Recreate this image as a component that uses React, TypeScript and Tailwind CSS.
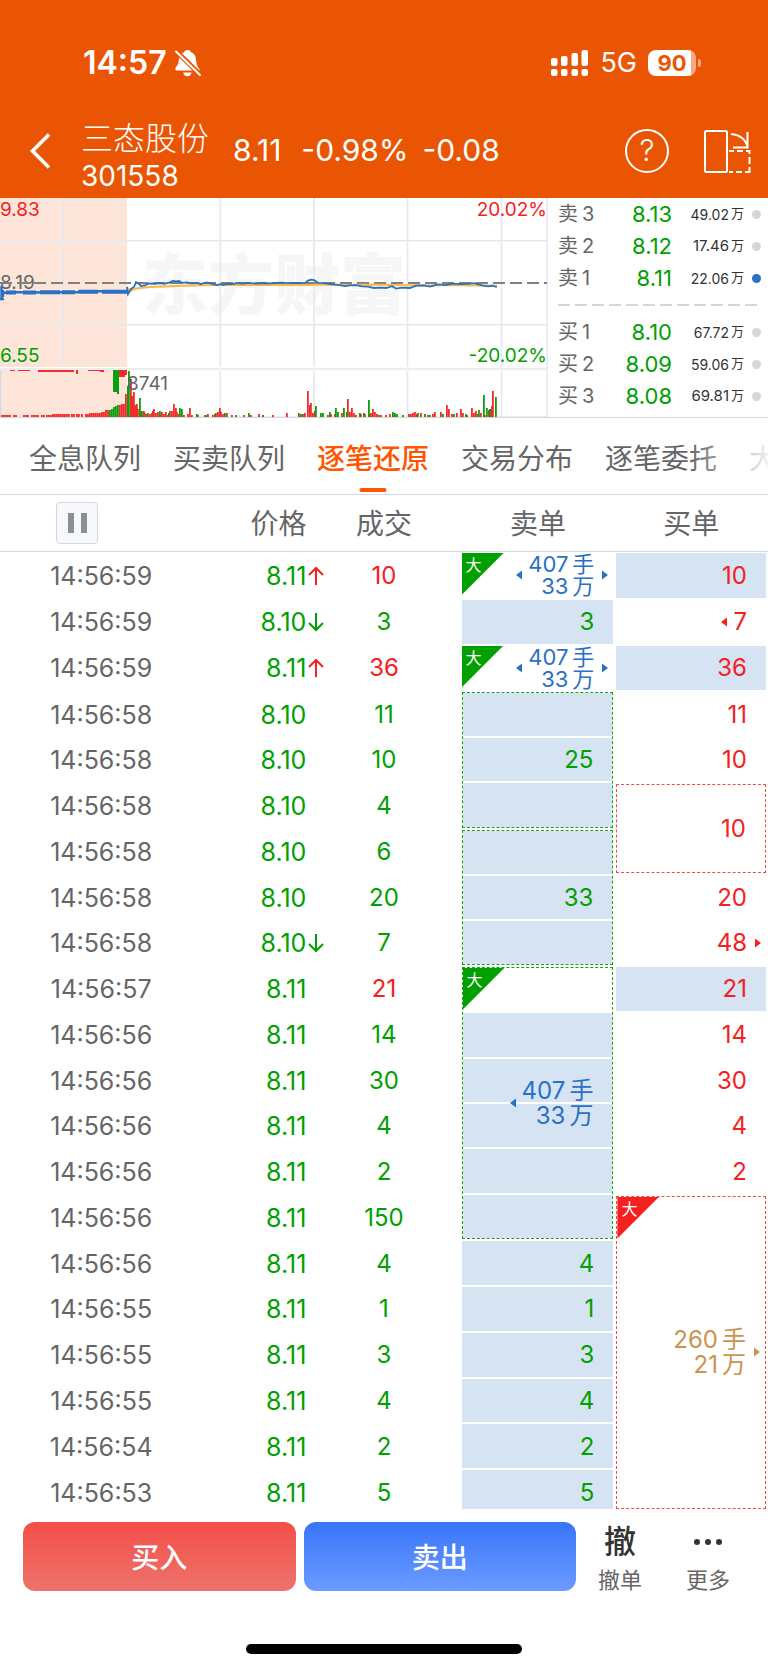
import React from "react";

type Mark = {
  text: string;
  tone: "red" | "green" | "blue" | "tan";
  unit?: string;
  span?: number;
  fill?: boolean;
  dashed?: boolean;
  big?: boolean;
  left?: boolean;
  right?: boolean;
};

type Trade = {
  time: string;
  price: string;
  dir?: "up" | "down";
  volume: string;
  buyer?: boolean;
  sell?: Mark;
  buy?: Mark;
};

const textTone = {
  red: "text-[#f52020]",
  green: "text-[#00a000]",
  blue: "text-[#2a70c4]",
  tan: "text-[#cc9250]",
};

const trades: Trade[] = [
  { time: "14:56:59", price: "8.11", dir: "up", volume: "10", buyer: true, sell: { text: "407", unit: "33", tone: "blue", big: true, left: true, right: true }, buy: { text: "10", tone: "red", fill: true } },
  { time: "14:56:59", price: "8.10", dir: "down", volume: "3", sell: { text: "3", tone: "green", fill: true }, buy: { text: "7", tone: "red", left: true } },
  { time: "14:56:59", price: "8.11", dir: "up", volume: "36", buyer: true, sell: { text: "407", unit: "33", tone: "blue", big: true, left: true, right: true }, buy: { text: "36", tone: "red", fill: true } },
  { time: "14:56:58", price: "8.10", volume: "11", sell: { text: "25", tone: "green", span: 3, fill: true, dashed: true }, buy: { text: "11", tone: "red" } },
  { time: "14:56:58", price: "8.10", volume: "10", buy: { text: "10", tone: "red" } },
  { time: "14:56:58", price: "8.10", volume: "4", buy: { text: "10", tone: "red", span: 2, dashed: true } },
  { time: "14:56:58", price: "8.10", volume: "6", sell: { text: "33", tone: "green", span: 3, fill: true, dashed: true } },
  { time: "14:56:58", price: "8.10", volume: "20", buy: { text: "20", tone: "red" } },
  { time: "14:56:58", price: "8.10", dir: "down", volume: "7", buy: { text: "48", tone: "red", right: true } },
  { time: "14:56:57", price: "8.11", volume: "21", buyer: true, sell: { text: "407", unit: "33", tone: "blue", span: 6, fill: true, dashed: true, big: true, left: true }, buy: { text: "21", tone: "red", fill: true } },
  { time: "14:56:56", price: "8.11", volume: "14", buy: { text: "14", tone: "red" } },
  { time: "14:56:56", price: "8.11", volume: "30", buy: { text: "30", tone: "red" } },
  { time: "14:56:56", price: "8.11", volume: "4", buy: { text: "4", tone: "red" } },
  { time: "14:56:56", price: "8.11", volume: "2", buy: { text: "2", tone: "red" } },
  { time: "14:56:56", price: "8.11", volume: "150", buy: { text: "260", unit: "21", tone: "tan", span: 7, dashed: true, big: true, right: true } },
  { time: "14:56:56", price: "8.11", volume: "4", sell: { text: "4", tone: "green", fill: true } },
  { time: "14:56:55", price: "8.11", volume: "1", sell: { text: "1", tone: "green", fill: true } },
  { time: "14:56:55", price: "8.11", volume: "3", sell: { text: "3", tone: "green", fill: true } },
  { time: "14:56:55", price: "8.11", volume: "4", sell: { text: "4", tone: "green", fill: true } },
  { time: "14:56:54", price: "8.11", volume: "2", sell: { text: "2", tone: "green", fill: true } },
  { time: "14:56:53", price: "8.11", volume: "5", sell: { text: "5", tone: "green", fill: true } },
];

const asks = [
  { label: "卖3", price: "8.13", amount: "49.02", wide: false, active: false },
  { label: "卖2", price: "8.12", amount: "17.46", wide: true, active: false },
  { label: "卖1", price: "8.11", amount: "22.06", wide: false, active: true },
];

const bids = [
  { label: "买1", price: "8.10", amount: "67.72", wide: false, active: false },
  { label: "买2", price: "8.09", amount: "59.06", wide: false, active: false },
  { label: "买3", price: "8.08", amount: "69.81", wide: true, active: false },
];

const tabs = ["全息队列", "买卖队列", "逐笔还原", "交易分布", "逐笔委托", "大"];

// x, height pairs of the volume bars
const redBars = [
  [1, 2], [3, 2], [5, 2], [7, 2], [9, 2], [13, 2], [15, 2], [23, 2], [25, 2], [27, 2], [31, 2], [33, 2],
  [35, 2], [37, 2], [41, 2], [43, 2], [46, 2], [48, 2], [50, 2], [52, 3], [54, 3], [56, 3], [58, 3], [60, 3],
  [62, 3], [64, 3], [66, 3], [68, 3], [71, 3], [73, 3], [76, 3], [78, 3], [81, 3], [85, 3], [87, 3], [89, 4],
  [91, 4], [93, 4], [95, 4], [97, 4], [99, 4], [101, 5], [103, 5], [105, 7], [107, 7], [119, 12], [121, 13],
  [123, 13], [125, 23], [130, 38], [131, 21], [132, 21], [133, 25], [134, 12], [135, 12], [136, 13], [137, 8],
  [140, 5], [143, 6], [144, 4], [147, 4], [149, 3], [151, 4], [152, 6], [153, 8], [155, 4], [157, 5], [159, 2],
  [161, 5], [163, 3], [165, 5], [167, 2], [169, 6], [171, 6], [173, 13], [175, 9], [176, 5], [178, 3], [183, 2],
  [187, 3], [189, 9], [191, 2], [197, 2], [204, 2], [207, 3], [212, 2], [214, 3], [217, 5], [219, 9], [220, 5],
  [222, 3], [226, 4], [231, 2], [243, 2], [250, 2], [258, 3], [262, 2], [272, 2], [286, 4], [300, 3], [304, 4],
  [307, 26], [309, 12], [310, 14], [312, 4], [314, 6], [327, 2], [330, 3], [334, 3], [341, 4], [347, 18],
  [349, 5], [351, 9], [353, 4], [355, 2], [360, 3], [363, 4], [368, 3], [370, 4], [372, 8], [374, 5], [376, 3],
  [380, 2], [385, 2], [389, 3], [393, 2], [408, 3], [410, 3], [412, 4], [414, 5], [416, 3], [420, 4], [427, 2],
  [432, 3], [434, 5], [440, 5], [446, 12], [448, 8], [451, 3], [456, 4], [460, 8], [462, 4], [466, 2], [471, 9],
  [473, 4], [475, 6], [477, 3], [480, 4], [484, 2], [488, 7], [490, 8], [491, 11], [492, 26],
];

const greenBars = [
  [109, 7], [111, 8], [113, 10], [115, 11], [117, 12], [127, 31], [128, 46], [139, 19], [141, 6], [146, 3],
  [159, 6], [168, 4], [179, 9], [181, 8], [196, 3], [205, 2], [215, 4], [224, 4], [235, 2], [248, 4], [262, 2],
  [298, 4], [302, 3], [315, 11], [320, 4], [322, 4], [329, 5], [335, 9], [337, 5], [343, 9], [346, 5], [359, 4],
  [364, 3], [368, 17], [378, 2], [392, 5], [394, 4], [396, 3], [402, 2], [417, 4], [424, 3], [429, 2], [442, 3],
  [453, 3], [465, 3], [478, 7], [483, 22], [486, 9], [489, 8], [495, 20],
];

const Chart = () => (
  <svg
    viewBox="0 0 548 220"
    className="block h-auto w-full"
    fontFamily="Inter, 'Noto Sans CJK SC', sans-serif"
    fontSize="19"
  >
    <rect x="0" y="0" width="127" height="169" fill="#fde6d9" />
    <rect x="0" y="172" width="127" height="47" fill="#fde6d9" />
    <text x="142" y="111" fontSize="66" fontWeight="900" fill="#f6f6f7">
      东方财富
    </text>
    <g stroke="#e6e8ef" strokeWidth="1.6">
      <path d="M0 42.7H547M0 126.7H547M0 171H547" />
      <path d="M63.5 0V169M220.3 0V169M314 0V169M407.5 0V169M501.5 0V169M547.3 0V219" />
      <path d="M220.3 173V219M314 173V219M407.5 173V219M501.5 173V219" />
      <path d="M0.5 172V219M0 219.2H548" stroke="#d6d9e0" />
    </g>
    <text x="0" y="91" fill="#666">8.19</text>
    <path d="M0 85H547" stroke="#808080" strokeWidth="1.8" strokeDasharray="12 5" />
    <path
      d="M127 89L130 93L136 90.5L150 89L175 88L200 87.3L240 87L310 87L318 86.4L345 87L370 86.6L400 87.3L430 87.6L450 87L475 87.5L497 87.8"
      fill="none"
      stroke="#fbb93c"
      strokeWidth="2"
    />
    <path
      d="M1.5 88V102M0 101H4M3 92V99M3 95L12 94L30 94.5L55 94.2L78 94.3L79 93.2L118 93.3L126 94"
      fill="none"
      stroke="#2a70c4"
      strokeWidth="2.4"
    />
    <path d="M6 94.5H16M23 94.5H36M40 94.3H60M62 94.3H75M79 93.8H98M102 93.8H128" stroke="#2a70c4" strokeWidth="4" />
    <path
      d="M127 89L128 96L131 91L134 89L136 84L139 86L141 88L145 87.5L149 85.5L155 85.8L160 85L164 85.8L169 84.6L173 83L176 83.4L179 83L182 84.8L187 84.4L191 85.4L197 85L201 86.2L204 84.8L208 84.6L212 85.8L217 87L221 86L223 87L227 85.8L233 86.2L237 85L243 85.6L248 84.8L256 85.6L262 85L270 85.4L280 84.6L288 85.2L298 84.8L305 85.2L308 82.6L311 81.6L314 82L318 84.8L324 85.2L330 86L338 86.8L345 88.2L350 87.4L356 87.2L362 88.4L368 88.6L374 90L380 89.6L386 90L392 88.2L396 90.6L402 89.6L410 90L416 87.6L424 87.4L430 88.6L438 86.4L446 87.2L452 85.6L460 86.2L468 85.8L474 85.2L482 87.4L488 88.4L492 87.6L497 89"
      fill="none"
      stroke="#2a70c4"
      strokeWidth="1.8"
    />
    <g fill="#f52a2a">
      {redBars.map(([x, h]) => (
        <rect key={x} x={x} y={219 - h} width="1.8" height={h} />
      ))}
      <path d="M10 172h5v1h-5zM18 172h12v1h-12zM38 172h25v2h-25zM56 172h18v2h-18zM76 172h2v4h-2zM88 172h14v1h-14zM100 172h4v2h-4zM119 172h6v7h-6zM125 172h2v5h-2z" />
    </g>
    <g fill="#0ba00b">
      {greenBars.map(([x, h]) => (
        <rect key={x} x={x} y={219 - h} width="1.8" height={h} />
      ))}
      <path d="M113 172h6v24h-2v-2h-4z" />
    </g>
    <text x="0" y="18" fill="#f52020">9.83</text>
    <text x="547" y="18" textAnchor="end" fill="#f52020">20.02%</text>
    <text x="0" y="164" fill="#00a000">6.55</text>
    <text x="547" y="164" textAnchor="end" fill="#00a000">-20.02%</text>
    <text x="127" y="192" fill="#666">8741</text>
  </svg>
);

const Quotes = ({ rows }: { rows: typeof asks }) => (
  <ul>
    {rows.map((row) => (
      <li key={row.label} className="flex h-8 items-center">
        <span className="flex w-12 gap-1 text-[20px] text-[#666]">
          <span>{row.label[0]}</span>
          <span>{row.label[1]}</span>
        </span>
        <span className="w-[66px] text-right text-[22px] text-[#00a000]">
          {row.price}
        </span>
        <span
          className={`flex flex-1 items-center justify-end gap-0.5 text-[#333] ${
            row.wide ? "text-[15px]" : "text-[14px]"
          }`}
        >
          {row.amount}
          <span className="text-[13px]">万</span>
        </span>
        <span
          className={`ml-2 size-[9px] rounded-full ${
            row.active ? "bg-[#2a70c4]" : "bg-[#d3d6dc]"
          }`}
        />
      </li>
    ))}
  </ul>
);

const Pointer = ({ flip }: { flip?: boolean }) => (
  <svg viewBox="0 0 6 10" className="h-2.5 w-1.5 shrink-0" fill="currentColor">
    <path d={flip ? "M6 0.5V9.5L0 5Z" : "M0 0.5V9.5L6 5Z"} />
  </svg>
);

const DirArrow = ({ dir }: { dir: "up" | "down" }) => (
  <svg
    viewBox="0 0 16 20"
    className={`h-5 w-4 ${dir === "up" ? "text-[#f52020]" : "text-[#00a000]"}`}
    fill="none"
    stroke="currentColor"
    strokeWidth="2"
  >
    <path d={dir === "up" ? "M8 19V2M1 9L8 2L15 9" : "M8 1V18M1 11L8 18L15 11"} />
  </svg>
);

const OrderBox = ({
  mark,
  side,
  clipped,
}: {
  mark: Mark;
  side: "sell" | "buy";
  clipped?: boolean;
}) => {
  const span = mark.span || 1;
  const color = side === "sell" ? "border-[#12a512]" : "border-[#f64848]";
  return (
    <div
      className={`relative grid h-full ${
        mark.dashed ? `border border-dashed ${color}` : ""
      }`}
    >
      {mark.fill && (
        <div
          className={`grid auto-rows-fr gap-0.5 [grid-area:1/1] ${clipped ? "mb-[5px]" : ""}`}
        >
          {Array.from({ length: span }).map((_, i) => (
            <div key={i} className={mark.big && i === 0 ? "" : "bg-[#d6e3f3]"} />
          ))}
        </div>
      )}
      {mark.big && (
        <span
          className={`absolute top-0 left-0 size-[42px] pt-0.5 pl-1 text-[16px] leading-5 text-white [clip-path:polygon(0_0,100%_0,0_100%)] ${
            side === "sell" ? "bg-[#00a000]" : "bg-[#f52020]"
          }`}
        >
          大
        </span>
      )}
      <div
        className={`flex items-center justify-end [grid-area:1/1] ${textTone[mark.tone]}`}
      >
        {mark.left && <Pointer flip />}
        {mark.unit ? (
          <span
            className={`flex flex-col items-end pl-1.5 ${
              span > 1 ? "text-[24px] leading-[25px]" : "text-[22px] leading-[22px]"
            }`}
          >
            <span className="flex gap-1">
              {mark.text}
              <span>手</span>
            </span>
            <span className="flex gap-1">
              {mark.unit}
              <span>万</span>
            </span>
          </span>
        ) : (
          <span className="pt-px pl-1.5">{mark.text}</span>
        )}
        <span className="w-[19px] pl-2">{mark.right && <Pointer />}</span>
      </div>
    </div>
  );
};

const TradeTable = () => (
  <table className="w-full flex-1 table-fixed border-separate border-spacing-0 text-[24px] leading-7">
    <thead>
      <tr className="h-[57px] text-[28px] text-[#666] *:border-b *:border-[#d3d6df] *:p-0 *:font-normal">
        <th className="w-[30%] text-left">
          <button
            aria-label="暂停"
            className="ml-14 flex size-[42px] items-center justify-center gap-[7px] rounded border border-[#d3d6df] bg-[#f7f8fb]"
          >
            <span className="h-5 w-1.5 bg-[#8e8e96]" />
            <span className="h-5 w-1.5 bg-[#8e8e96]" />
          </button>
        </th>
        <th className="w-[12.5%]">
          <div className="pt-0.5 pr-5 text-right">价格</div>
        </th>
        <th className="w-[15%]">
          <div className="pt-0.5">成交</div>
        </th>
        <th className="w-[22.5%]">
          <div className="pt-0.5 pl-5">卖单</div>
        </th>
        <th className="w-[20%]">
          <div className="pt-0.5">买单</div>
        </th>
      </tr>
    </thead>
    <tbody>
      {trades.map((trade, index) => {
        const last = (mark: Mark) => index + (mark.span || 1) === trades.length;
        return (
          <tr key={index} className="h-[45px]">
            <td className="pt-px pr-7 text-center text-[25px] text-[#666]">
              {trade.time}
            </td>
            <td className="pt-px">
              <div className="flex items-center justify-end text-[25px] text-[#00a000]">
                {trade.price}
                <span className="w-5 pl-0.5">
                  {trade.dir && <DirArrow dir={trade.dir} />}
                </span>
              </div>
            </td>
            <td
              className={`pt-px text-center ${
                trade.buyer ? "text-[#f52020]" : "text-[#00a000]"
              }`}
            >
              {trade.volume}
            </td>
            {trade.sell && (
              <td rowSpan={trade.sell.span} className="h-px py-px pr-px pl-5">
                <OrderBox mark={trade.sell} side="sell" clipped={last(trade.sell)} />
              </td>
            )}
            {trade.buy && (
              <td
                rowSpan={trade.buy.span}
                className={`h-px px-0.5 pt-px ${last(trade.buy) ? "pb-1.5" : "pb-px"}`}
              >
                <OrderBox mark={trade.buy} side="buy" />
              </td>
            )}
          </tr>
        );
      })}
    </tbody>
  </table>
);

const StatusBar = () => (
  <div className="flex h-[77px] items-end justify-between pr-[67px] pl-[83px]">
    <div className="flex items-center gap-2">
      <span className="text-[32px] leading-7 font-semibold">14:57</span>
      <svg viewBox="0 0 26 28" className="h-7 w-[26px]" fill="currentColor">
        <path d="M12.5 1c1.8 0 3 .9 3.4 2.2C19.4 4.3 21 7.5 21.2 11.5c.2 4 1 5.8 2.3 7.5 1.2 1.5 1.3 1.7 1 2.6H3c-2 0-3-.7-2.7-2.2.3-1.5 3-3 3.500-8C4.2 7 6 4.2 9.2 3.2 9.5 1.9 10.7 1 12.5 1zM8.300 23.6h8.200c-.4 2.400-2 3.700-4.100 3.700s-3.800-1.300-4.100-3.700z" />
        <path d="M0 1L26 26.5" stroke="#ea5504" strokeWidth="5" />
        <path d="M1 2.5L25 26" stroke="currentColor" strokeWidth="2" strokeLinecap="round" />
      </svg>
    </div>
    <div className="flex items-center">
      <svg viewBox="0 0 38 26" className="h-[26px] w-[38px]" fill="currentColor">
        <rect x="0" y="8" width="6.5" height="8" rx="2" />
        <rect x="10" y="6" width="6.5" height="10" rx="2" />
        <rect x="20.5" y="3" width="6.5" height="13" rx="2" />
        <rect x="30.5" y="0" width="6.5" height="16" rx="2" />
        <rect x="0" y="19" width="6.5" height="7" rx="2" />
        <rect x="10" y="19" width="6.5" height="7" rx="2" />
        <rect x="20.5" y="19" width="6.5" height="7" rx="2" />
        <rect x="30.5" y="19" width="6.5" height="7" rx="2" />
      </svg>
      <span className="px-[11px] text-[27px] leading-7">5G</span>
      <span className="flex h-[26px] w-12 items-center justify-center rounded-lg bg-linear-to-r from-white from-90% to-[#f5aa82] to-90% text-[22px] leading-6 font-bold text-[#ea5504]">
        90
      </span>
      <span className="ml-0.5 h-2 w-[3px] rounded-r-full bg-[#f5aa82]" />
    </div>
  </div>
);

const Header = () => (
  <header className="bg-[#ea5504] text-white">
    <StatusBar />
    <div className="flex h-[121px] items-center pt-[26px] pr-[17px] pl-[30px]">
      <button aria-label="返回">
        <svg viewBox="0 0 20 36" className="h-9 w-5" fill="none" stroke="currentColor" strokeWidth="3.6">
          <path d="M19 1.5L2.5 18L19 34.5" />
        </svg>
      </button>
      <div className="pt-3 pl-[31px]">
        <h1 className="text-[32px] leading-[38px] font-light">三态股份</h1>
        <p className="text-[28px] leading-9">301558</p>
      </div>
      <div className="flex flex-1 gap-3.5 pl-6 text-[30px]">
        <span className="pr-1.5">8.11</span>
        <span>-0.98%</span>
        <span>-0.08</span>
      </div>
      <button
        aria-label="帮助"
        className="flex size-11 items-center justify-center rounded-full border-2 border-white text-[30px] font-light"
      >
        ?
      </button>
      <button aria-label="分屏" className="pl-[34px]">
        <svg viewBox="0 0 48 44" className="h-11 w-12" fill="none" stroke="currentColor" strokeWidth="2">
          <rect x="2" y="2" width="22" height="41" rx="1.5" />
          <path d="M28 5C36 5.5 43 10 44.500 18M44.5 3V18.5H30" />
          <path d="M26 22H31M34 22H40M43 22H46.5V25M46.5 28V35M46.5 38V43H42M39 43H33M30 43H26" />
        </svg>
      </button>
    </div>
  </header>
);

const Tabs = () => (
  <nav className="relative flex h-[77px] gap-8 overflow-hidden border-b border-[#d3d6df] pl-[29px] text-[28px] whitespace-nowrap text-[#666]">
    {tabs.map((tab) => (
      <button
        key={tab}
        className={
          tab === "逐笔还原"
            ? "relative pt-1.5 font-medium text-[#ff5500] after:absolute after:bottom-0.5 after:left-1/2 after:h-1 after:w-[27px] after:-translate-x-1/2 after:rounded-full after:bg-[#ff5500]"
            : "pt-1.5"
        }
      >
        {tab}
      </button>
    ))}
    <div className="pointer-events-none absolute inset-y-0 right-0 w-20 bg-linear-to-r from-white/0 to-white/90" />
  </nav>
);

const Footer = () => (
  <footer className="pt-[7px] pb-4">
    <div className="flex h-[69px] pr-4 pl-[23px]">
      <div className="flex flex-1 gap-2 text-[28px] font-medium text-white">
        <button className="flex-1 rounded-xl bg-linear-to-b from-[#f44d48] to-[#ed726c] pt-0.5">
          买入
        </button>
        <button className="flex-1 rounded-xl bg-linear-to-b from-[#3875fa] to-[#6c9aff] pt-0.5">
          卖出
        </button>
      </div>
      <button className="flex w-[88px] flex-col items-center *:shrink-0">
        <span className="text-[32px] leading-10 font-medium text-[#333]">撤</span>
        <span className="text-[22px] leading-9 text-[#666]">撤单</span>
      </button>
      <button className="flex w-[88px] flex-col items-center *:shrink-0">
        <span className="flex h-10 items-center gap-[5px]">
          <span className="size-1.5 rounded-full bg-[#333]" />
          <span className="size-1.5 rounded-full bg-[#333]" />
          <span className="size-1.5 rounded-full bg-[#333]" />
        </span>
        <span className="text-[22px] leading-9 text-[#666]">更多</span>
      </button>
    </div>
    <div className="mx-auto mt-[53px] h-2.5 w-[36%] rounded-full bg-black" />
  </footer>
);

const App = () => {
  return (
    <div className="flex min-h-screen flex-col bg-white font-[Inter,'Noto_Sans_CJK_SC',sans-serif]">
      <Header />
      <section className="flex">
        <div className="min-w-0 flex-1">
          <Chart />
        </div>
        <div className="w-[220px] border-b border-[#d6d9e0] pr-[7px] pl-2.5">
          <Quotes rows={asks} />
          <div className="flex h-[22px] items-center">
            <div className="h-0.5 w-full bg-[repeating-linear-gradient(to_right,#d3d6dc_0_12px,transparent_12px_17px)]" />
          </div>
          <Quotes rows={bids} />
        </div>
      </section>
      <Tabs />
      <TradeTable />
      <Footer />
    </div>
  );
};

export default App;
